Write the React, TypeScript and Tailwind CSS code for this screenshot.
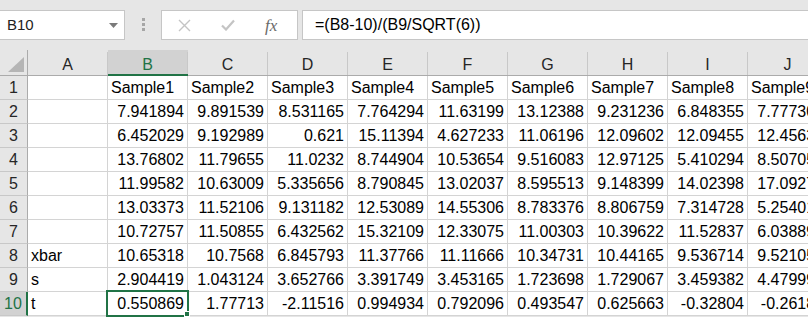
import React from 'react';

const COLS = ['A', 'B', 'C', 'D', 'E', 'F', 'G', 'H', 'I', 'J'];

// rows 2..10, columns B..J
const DATA: string[][] = [
  ['7.941894', '9.891539', '8.531165', '7.764294', '11.63199', '13.12388', '9.231236', '6.848355', '7.777306'],
  ['6.452029', '9.192989', '0.621', '15.11394', '4.627233', '11.06196', '12.09602', '12.09455', '12.45631'],
  ['13.76802', '11.79655', '11.0232', '8.744904', '10.53654', '9.516083', '12.97125', '5.410294', '8.507052'],
  ['11.99582', '10.63009', '5.335656', '8.790845', '13.02037', '8.595513', '9.148399', '14.02398', '17.09272'],
  ['13.03373', '11.52106', '9.131182', '12.53089', '14.55306', '8.783376', '8.806759', '7.314728', '5.254016'],
  ['10.72757', '11.50855', '6.432562', '15.32109', '12.33075', '11.00303', '10.39622', '11.52837', '6.038891'],
  ['10.65318', '10.7568', '6.845793', '11.37766', '11.11666', '10.34731', '10.44165', '9.536714', '9.521058'],
  ['2.904419', '1.043124', '3.652766', '3.391749', '3.453165', '1.723698', '1.729067', '3.459382', '4.479992'],
  ['0.550869', '1.77713', '-2.11516', '0.994934', '0.792096', '0.493547', '0.625663', '-0.32804', '-0.26187'],
];

const LABELS: Record<number, string> = { 8: 'xbar', 9: 's', 10: 't' };

function FormulaBar() {
  return (
    <div className="flex items-start h-[50px] pt-[10px]">
      {/* name box */}
      <div className="relative flex items-center w-[126px] h-[30px] -ml-px bg-white border border-[#c6c6c6]">
        <span className="pl-[7px] text-[15px] text-[#222]">B10</span>
        <svg className="absolute left-[109px] top-[12px]" width="9" height="5" viewBox="0 0 9 5">
          <path d="M0 0 L9 0 L4.5 5 Z" fill="#7a7a7a" />
        </svg>
      </div>

      {/* grip dots */}
      <div className="flex flex-col gap-[2px] ml-[17px] mt-[8px]">
        <div className="w-[3px] h-[3px] bg-[#a6a6a6]" />
        <div className="w-[3px] h-[3px] bg-[#a6a6a6]" />
        <div className="w-[3px] h-[3px] bg-[#a6a6a6]" />
      </div>

      {/* cancel / enter / fx */}
      <div className="relative ml-[16px] w-[137px] h-[30px] bg-white border border-[#c6c6c6]">
        <svg className="absolute left-[16px] top-[8px]" width="13" height="13" viewBox="0 0 13 13">
          <path d="M1 1 L12 12 M12 1 L1 12" stroke="#c4c4c4" strokeWidth="1.4" />
        </svg>
        <svg className="absolute left-[59px] top-[8px]" width="14" height="12" viewBox="0 0 14 12">
          <path d="M1 6.5 L5 10.5 L13 1.5" stroke="#c4c4c4" strokeWidth="2.2" fill="none" />
        </svg>
        <span className="absolute left-[103px] top-[2px] text-[17px] italic text-[#6a6a6a] font-['Liberation_Serif',serif]">
          fx
        </span>
      </div>

      {/* formula input */}
      <div className="flex items-center ml-[4px] flex-1 h-[30px] bg-white border border-[#c6c6c6] border-r-0">
        <span className="pl-[12px] text-[16px] text-black">=(B8-10)/(B9/SQRT(6))</span>
      </div>
    </div>
  );
}

function HeaderRow() {
  return (
    <div className="flex h-[26px]">
      <div className="relative w-[28px] shrink-0 border-r border-b border-[#ababab]">
        <svg className="absolute left-[8px] top-[7px]" width="16" height="15" viewBox="0 0 16 15">
          <path d="M16 0 L16 15 L0 15 Z" fill="#b5b5b5" />
        </svg>
      </div>
      {COLS.map((c) => {
        const sel = c === 'B';
        return (
          <div
            key={c}
            className={
              sel
                ? 'flex w-[80px] shrink-0 bg-[#d2d2d2] border-b-2 border-[#217346]'
                : 'flex w-[80px] shrink-0 border-b border-[#ababab]'
            }
          >
            <div
              className={
                sel
                  ? 'flex-1 flex justify-center pt-[5px] leading-[19px] text-[16px] text-[#217346]'
                  : 'flex-1 flex justify-center pt-[5px] leading-[20px] text-[16px] text-[#262626]'
              }
            >
              {c}
            </div>
            <div className="w-px mt-[2px] bg-[#c8c8c8]" />
          </div>
        );
      })}
    </div>
  );
}

function Row({ n }: { n: number }) {
  const sel = n === 10;
  const values = n === 1 ? COLS.slice(1).map((_, i) => `Sample${i + 1}`) : DATA[n - 2];
  return (
    <div className="flex h-[24px]">
      <div
        className={
          sel
            ? 'w-[28px] shrink-0 flex justify-center items-center bg-[#d2d2d2] border-r-2 border-r-[#217346] border-b border-b-[#c8c8c8] text-[16px] leading-[23px] text-[#217346]'
            : 'w-[28px] shrink-0 flex justify-center items-center border-r border-r-[#ababab] border-b border-b-[#c8c8c8] text-[16px] leading-[23px] text-[#262626]'
        }
      >
        {n}
      </div>
      <div className="w-[80px] shrink-0 bg-white border-r border-b border-[#d4d4d4] pl-[3px] text-[16px] leading-[23px] text-black">
        {LABELS[n] ?? ''}
      </div>
      {values.map((v, i) => (
        <div
          key={i}
          className={
            n === 1
              ? 'w-[80px] shrink-0 bg-white border-r border-b border-[#d4d4d4] pl-[3px] text-[16px] leading-[23px] text-black whitespace-nowrap overflow-hidden'
              : 'w-[80px] shrink-0 bg-white border-r border-b border-[#d4d4d4] pr-[3px] text-right text-[16px] leading-[23px] text-black whitespace-nowrap overflow-hidden'
          }
        >
          {v}
        </div>
      ))}
    </div>
  );
}

export default function App() {
  return (
    <div className="relative w-[808px] h-[317px] overflow-hidden bg-[#e6e6e6] font-['Liberation_Sans',Arial,sans-serif]">
      <FormulaBar />
      <div className="w-[850px]">
        <HeaderRow />
        {Array.from({ length: 10 }, (_, i) => (
          <Row key={i} n={i + 1} />
        ))}
      </div>

      {/* active cell outline B10 */}
      <div className="absolute left-[106px] top-[290px] w-[83px] h-[27px] border-2 border-[#217346] pointer-events-none" />
      <div className="absolute left-[184px] top-[311px] w-[6px] h-[6px] bg-[#217346] border border-white pointer-events-none" />
    </div>
  );
}
